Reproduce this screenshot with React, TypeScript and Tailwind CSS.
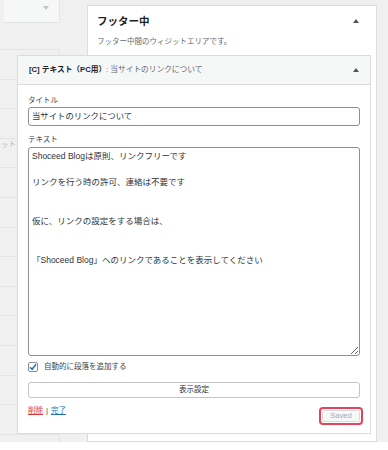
import React from "react";

function Up({ className = "" }: { className?: string }) {
  return (
    <svg width="6" height="4" viewBox="0 0 6 4" className={className}>
      <path d="M0 4 L3 0 L6 4 Z" fill="#50575e" />
    </svg>
  );
}

export default function App() {
  const rows = Array.from({ length: 13 });
  return (
    <div className='w-[388px] h-[450px] bg-white overflow-hidden font-["Liberation_Sans","Noto_Sans_CJK_JP",sans-serif]'>
      <div className="h-[442px] bg-[#f0f0f1] flex overflow-hidden">
        {/* left column */}
        <div className="w-[60px] shrink-0 flex flex-col overflow-hidden">
          <div className="ml-[4px] h-[23px] shrink-0 bg-[#f6f7f7] border-r border-b border-[#e2e4e7] flex justify-end pr-[10px] pt-[6px]">
            <svg width="6" height="4" viewBox="0 0 6 4">
              <path d="M0 0 L3 4 L6 0 Z" fill="#c3c4c7" />
            </svg>
          </div>
          <div className="h-[26px] shrink-0" />
          <div className="flex-1 border-t border-r border-[#e2e4e7] flex flex-col">
            {rows.map((_, i) => (
              <div
                key={i}
                className="h-[29.6px] shrink-0 border-b border-[#e2e4e7] overflow-hidden whitespace-nowrap"
              >
                {i === 3 ? (
                  <span className="block pl-[1px] mt-[1px] text-[7.5px] leading-[10px] text-[#b5b8bb]">
                    ット
                  </span>
                ) : null}
              </div>
            ))}
          </div>
        </div>
        <div className="w-[27px] shrink-0" />
        {/* right panel */}
        <div className="w-[290px] shrink-0 mt-[5px] h-[437px] bg-white border border-[#dcdcde] flex flex-col">
          <div className="flex items-center justify-between pl-[9px] pr-[17px] pt-[8px] h-[22px]">
            <span className="text-[10.5px] leading-[14px] font-bold text-[#1d2327]">フッター中</span>
            <Up />
          </div>
          <div className="pl-[9px] mt-[9px] text-[7.5px] leading-[10px] text-[#646970]">
            フッター中間のウィジットエリアです。
          </div>
          {/* widget card */}
          <div className="mt-[8px] -ml-[71px] w-[354px] border border-[#dcdcde] bg-white flex flex-col">
            <div className="h-[29px] bg-[#f6f7f7] border-b border-[#dcdcde] flex items-center justify-between pl-[11px] pr-[11px]">
              <span className="text-[7.7px] leading-[10px] whitespace-nowrap">
                <span className="font-bold text-[#1d2327]">[C] テキスト（PC用）</span>
                <span className="text-[#646970]">: 当サイトのリンクについて</span>
              </span>
              <Up />
            </div>
            <div className="flex flex-col px-[10px] pt-[11px] pb-[8px]">
              <div className="text-[7.5px] leading-[10px] text-[#3c434a]">タイトル</div>
              <div className="mt-[1px] h-[19px] border border-[#8c8f94] rounded-[3px] flex items-center pl-[3px] text-[8.4px] text-[#2c3338]">
                当サイトのリンクについて
              </div>
              <div className="mt-[9px] text-[7.5px] leading-[10px] text-[#3c434a]">テキスト</div>
              <textarea
                readOnly
                className="mt-[2px] h-[209px] w-full border border-[#8c8f94] rounded-[3px] px-[3px] py-[2px] text-[8.5px] leading-[13px] text-[#2c3338] outline-none resize-y"
                value={
                  "Shoceed Blogは原則、リンクフリーです\n\nリンクを行う時の許可、連絡は不要です\n\n\n仮に、リンクの設定をする場合は、\n\n\n「Shoceed Blog」へのリンクであることを表示してください"
                }
              />
              <div className="mt-[5px] h-[12px] flex items-center gap-[6px]">
                <div className="w-[10px] h-[10px] border border-[#8c8f94] rounded-[2px] bg-white flex items-center justify-center">
                  <svg width="8" height="8" viewBox="0 0 8 8">
                    <path d="M1 4.2 L3.1 6.3 L7 1.3" stroke="#2271b1" strokeWidth="1.5" fill="none" />
                  </svg>
                </div>
                <span className="text-[7.5px] leading-[10px] text-[#3c434a]">自動的に段落を追加する</span>
              </div>
              <div className="mt-[9px] h-[16px] border border-[#c3c4c7] rounded-[3px] bg-white flex items-center justify-center text-[7.5px] text-[#2c3338]">
                表示設定
              </div>
              <div className="mt-[9px] h-[18px] flex items-center justify-between">
                <div className="flex items-center gap-[3px] text-[7.5px] leading-[10px] -mt-[10px]">
                  <span className="text-[#d63638] underline">削除</span>
                  <span className="text-[#3c434a]">|</span>
                  <span className="text-[#2271b1] underline">完了</span>
                </div>
                <div className="-mr-[3px] w-[44px] h-[18px] border-2 border-[#e8425a] rounded-[4px] p-[1px] flex">
                  <div className="flex-1 bg-[#f6f7f7] border border-[#dcdcde] rounded-[2px] flex items-center justify-center text-[7.5px] text-[#a7aaad]">
                    Saved
                  </div>
                </div>
              </div>
            </div>
          </div>
        </div>
      </div>
    </div>
  );
}
